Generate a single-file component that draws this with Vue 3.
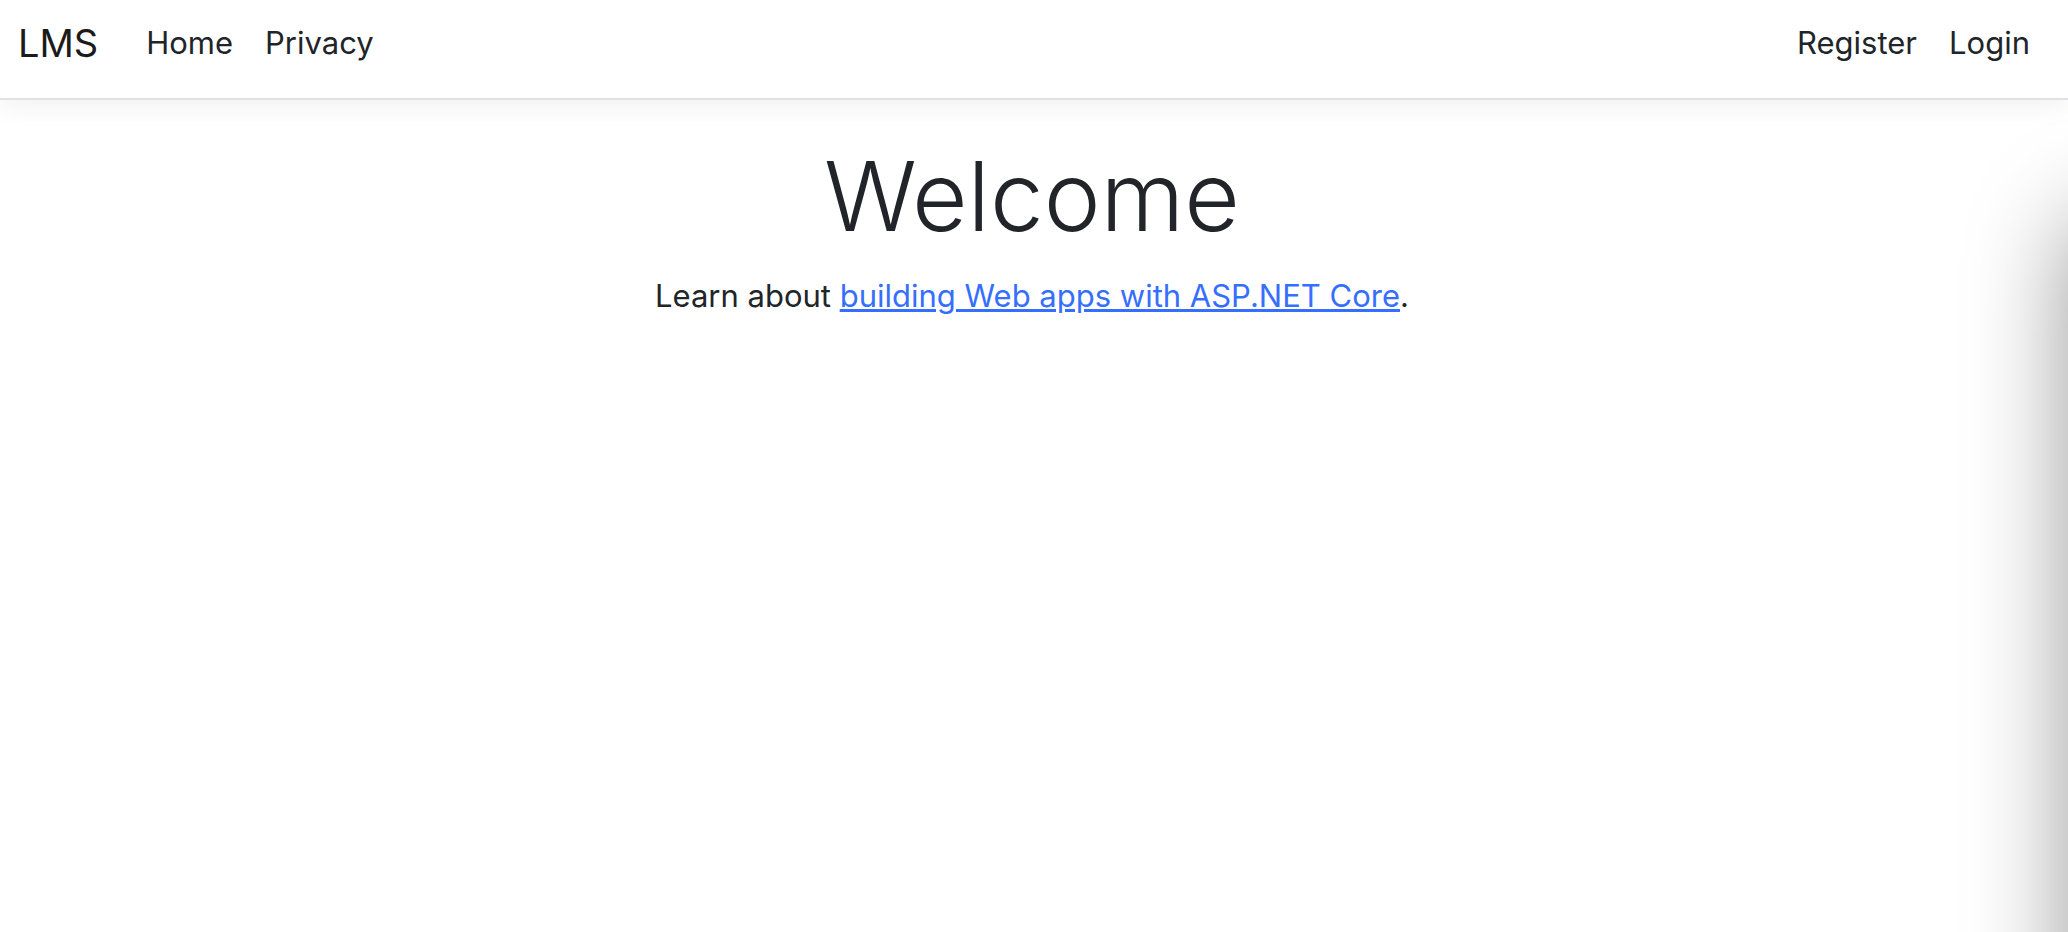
<script setup>
const pages = [
  { label: 'Home', href: '#home' },
  { label: 'Privacy', href: '#privacy' },
]
const account = [
  { label: 'Register', href: '#register' },
  { label: 'Login', href: '#login' },
]
</script>

<template>
  <div class="page">
    <header class="header">
      <nav class="navbar" aria-label="Main">
        <a class="brand" href="#">LMS</a>
        <ul class="links">
          <li v-for="item in pages" :key="item.label">
            <a class="link" :href="item.href">{{ item.label }}</a>
          </li>
        </ul>
        <ul class="links account">
          <li v-for="item in account" :key="item.label">
            <a class="link" :href="item.href">{{ item.label }}</a>
          </li>
        </ul>
      </nav>
    </header>
    <main class="content">
      <h1 class="title">Welcome</h1>
      <p class="text">
        Learn about <a class="learn" href="#learn">building Web apps with ASP.NET Core</a>.
      </p>
    </main>
    <div class="edge-shadow" aria-hidden="true"></div>
  </div>
</template>

<style>
body {
  margin: 0;
  background: #fff;
}
</style>

<style scoped>
.page {
  position: relative;
  min-height: 100vh;
  overflow: hidden;
  color: #212529;
  font-family: Inter, "Liberation Sans", sans-serif;
  font-size: 31px;
  line-height: 48px;
}

.header {
  margin-bottom: 32px;
  border-bottom: 2px solid #dee2e6;
  box-shadow: 0 8px 24px rgba(0, 0, 0, 0.05);
}

.navbar {
  display: flex;
  align-items: center;
  padding: 19px 22px 31px 18px;
}

.brand {
  margin-right: 32px;
  color: #1b1b1b;
  font-size: 38px;
  text-decoration: none;
}

.links {
  display: flex;
  margin: 0;
  padding: 0;
  list-style: none;
}

.account {
  margin-left: auto;
}

.link {
  display: block;
  padding: 0 16px;
  color: #212529;
  text-decoration: none;
}

.content {
  padding: 0 26px 32px 22px;
  text-align: center;
}

.title {
  margin: 0 0 12px;
  font-size: 96px;
  font-weight: 300;
  line-height: 128px;
}

.text {
  margin: 0;
}

.learn {
  color: #366fff;
  text-decoration: underline;
  text-decoration-thickness: 3px;
}

.edge-shadow {
  position: absolute;
  top: 220px;
  bottom: -200px;
  left: 100%;
  width: 400px;
  border-radius: 20px;
  box-shadow: 0 0 100px rgba(0, 0, 0, 0.4);
}
</style>
